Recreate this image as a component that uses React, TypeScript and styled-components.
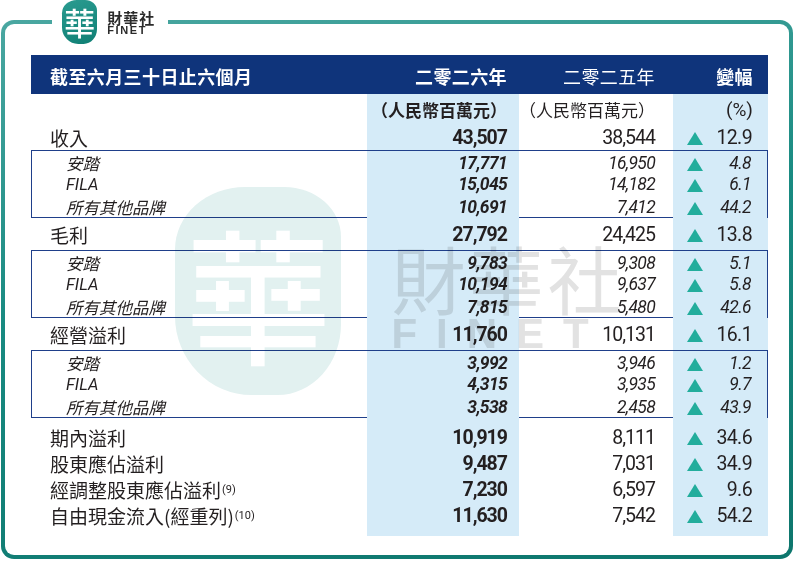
import React from "react";
import styled, { createGlobalStyle } from "styled-components";

const GlobalStyle = createGlobalStyle`
  html, body {
    margin: 0;
    padding: 0;
    background: #ffffff;
  }
  body {
    width: 794px;
    height: 580px;
    overflow: hidden;
    font-family: "Noto Sans CJK TC", "Noto Sans", sans-serif;
    color: #231f20;
  }
`;

const CJK = `"Noto Sans CJK TC", "Noto Sans CJK SC", sans-serif`;
const NUM = `Roboto, "Liberation Sans", "Noto Sans CJK TC", sans-serif`;
const NAVY = "#0f347b";
const SKY = "#d5ebf8";

const Page = styled.div`
  position: relative;
  padding: 20px 0 0 1px;
`;

const Frame = styled.div`
  box-sizing: border-box;
  width: 792px;
  height: 539px;
  padding: 4px;
  border-radius: 13px;
  background: linear-gradient(170deg, #4aa7a1 0%, #188a81 45%, #0d766d 100%);
`;

const Inner = styled.div`
  position: relative;
  box-sizing: border-box;
  height: 100%;
  padding: 31px 21px 0 26px;
  background: #ffffff;
  border-radius: 9px;
`;

/* ---------- logo sitting on the frame's top edge ---------- */

const LogoGap = styled.div`
  position: absolute;
  left: 52px;
  top: 0;
  width: 116px;
  height: 46px;
  display: flex;
  align-items: flex-start;
  gap: 10px;
  padding-left: 10px;
  box-sizing: border-box;
  background: #ffffff;
`;

const LogoSeal = styled.div<{ $size: number; $bg: string; $fg: string }>`
  width: ${(p) => p.$size * 0.8}px;
  height: ${(p) => p.$size}px;
  border-radius: 42% 34% 38% 46% / 30% 24% 34% 38%;
  background: ${(p) => p.$bg};
  color: ${(p) => p.$fg};
  display: flex;
  align-items: center;
  justify-content: center;
  font-family: ${CJK};
  font-weight: 500;
  font-size: ${(p) => p.$size * 0.7}px;
  line-height: 1;
`;

const LogoWords = styled.div`
  display: flex;
  flex-direction: column;
  padding-top: 10px;
`;

const LogoCn = styled.span`
  font-family: ${CJK};
  font-weight: 700;
  font-size: 15px;
  line-height: 15px;
  letter-spacing: 1px;
  color: #2b2b2b;
`;

const LogoEn = styled.span`
  font-family: "Liberation Sans", Arial, sans-serif;
  font-weight: 700;
  font-size: 11px;
  line-height: 11px;
  letter-spacing: 1.6px;
  color: #2b2b2b;
`;

/* ---------- faint watermark over the table ---------- */

const Watermark = styled.div`
  position: absolute;
  left: 170px;
  top: 163px;
  display: flex;
  align-items: center;
  gap: 50px;
  pointer-events: none;
  mix-blend-mode: multiply;
  z-index: 2;
`;

const WaterWords = styled.div`
  display: flex;
  flex-direction: column;
  align-items: flex-start;
  margin-top: 12px;
  color: #e2e2e2;
`;

const WaterCn = styled.span`
  font-family: ${CJK};
  font-size: 74px;
  line-height: 74px;
  letter-spacing: 4px;
`;

const WaterEn = styled.span`
  font-family: "Liberation Sans", Arial, sans-serif;
  font-weight: 700;
  font-size: 42px;
  line-height: 40px;
  letter-spacing: 19px;
`;

/* ---------- table ---------- */

const Table = styled.div`
  width: 737px;
  display: flex;
  flex-direction: column;
`;

const Row = styled.div<{ $h: number; $inBox?: boolean }>`
  display: grid;
  grid-template-columns: ${(p) => (p.$inBox ? "335px 152px 154px 94px" : "336px 152px 154px 95px")};
  height: ${(p) => p.$h}px;
`;

const HeaderRow = styled(Row)`
  background: ${NAVY};
  color: #ffffff;
  font-family: ${CJK};
  font-size: 18px;
`;

const HeadCell = styled.div<{ $bold?: boolean; $right?: number; $left?: number }>`
  display: flex;
  align-items: center;
  justify-content: ${(p) => (p.$left !== undefined ? "flex-start" : "flex-end")};
  padding-left: ${(p) => p.$left ?? 0}px;
  padding-right: ${(p) => p.$right ?? 0}px;
  font-weight: ${(p) => (p.$bold ? 700 : 400)};
  letter-spacing: 0.4px;
  padding-top: 2px;
`;

const Cell = styled.div<{ $sky?: boolean }>`
  display: flex;
  align-items: center;
  background: ${(p) => (p.$sky ? SKY : "transparent")};
`;

const Label = styled(Cell)<{ $sub?: boolean }>`
  padding-left: ${(p) => (p.$sub ? 34 : 19)}px;
  font-family: ${(p) => (p.$sub ? `Roboto, ${CJK}` : CJK)};
  font-size: ${(p) => (p.$sub ? 16.5 : 19)}px;
  font-style: ${(p) => (p.$sub ? "italic" : "normal")};
  white-space: nowrap;
`;

const Note = styled.sup`
  font-family: Roboto, sans-serif;
  font-size: 11px;
  line-height: 1;
  vertical-align: 8px;
  margin-left: 1px;
`;

const Num = styled(Cell)<{ $bold?: boolean; $sub?: boolean; $right: number }>`
  justify-content: flex-end;
  padding-right: ${(p) => p.$right}px;
  font-family: ${NUM};
  font-size: ${(p) => (p.$sub ? 17.5 : 19.5)}px;
  font-style: ${(p) => (p.$sub ? "italic" : "normal")};
  font-weight: ${(p) => (p.$bold ? 700 : 400)};
  letter-spacing: ${(p) => (p.$sub ? -0.7 : -1)}px;
`;

const Unit = styled(Cell)<{ $bold?: boolean; $right: number }>`
  justify-content: flex-end;
  padding-right: ${(p) => p.$right}px;
  font-family: ${CJK};
  font-size: 17px;
  font-weight: ${(p) => (p.$bold ? 700 : 400)};
  white-space: nowrap;
`;

const Percent = styled(Cell)`
  justify-content: flex-end;
  padding-right: 15px;
  font-family: ${NUM};
  font-size: 19px;
`;

const Change = styled(Cell)<{ $sub?: boolean }>`
  justify-content: space-between;
  padding: 0 16px 0 14px;
  background: ${SKY};
  font-family: ${NUM};
  font-size: ${(p) => (p.$sub ? 17.5 : 19.5)}px;
  font-style: ${(p) => (p.$sub ? "italic" : "normal")};
  letter-spacing: -0.6px;
`;

const UpArrow = styled.span`
  width: 0;
  height: 0;
  border-left: 8px solid transparent;
  border-right: 8px solid transparent;
  border-bottom: 13px solid #22ad9c;
  margin-top: 2px;
`;

const Box = styled.div`
  border: 1px solid #1f3f8a;
  display: flex;
  flex-direction: column;
`;

const Tail = styled.div<{ $h: number }>`
  display: grid;
  grid-template-columns: 336px 152px 154px 95px;
  height: ${(p) => p.$h}px;
`;

const Spacer = styled.div<{ $sky?: boolean }>`
  background: ${(p) => (p.$sky ? SKY : "transparent")};
`;

type Line = { label: string; note?: string; cur: string; prev: string; chg: string };
type Section = { main: Line; parts: Line[] };

const sections: Section[] = [
  {
    main: { label: "收入", cur: "43,507", prev: "38,544", chg: "12.9" },
    parts: [
      { label: "安踏", cur: "17,771", prev: "16,950", chg: "4.8" },
      { label: "FILA", cur: "15,045", prev: "14,182", chg: "6.1" },
      { label: "所有其他品牌", cur: "10,691", prev: "7,412", chg: "44.2" },
    ],
  },
  {
    main: { label: "毛利", cur: "27,792", prev: "24,425", chg: "13.8" },
    parts: [
      { label: "安踏", cur: "9,783", prev: "9,308", chg: "5.1" },
      { label: "FILA", cur: "10,194", prev: "9,637", chg: "5.8" },
      { label: "所有其他品牌", cur: "7,815", prev: "5,480", chg: "42.6" },
    ],
  },
  {
    main: { label: "經營溢利", cur: "11,760", prev: "10,131", chg: "16.1" },
    parts: [
      { label: "安踏", cur: "3,992", prev: "3,946", chg: "1.2" },
      { label: "FILA", cur: "4,315", prev: "3,935", chg: "9.7" },
      { label: "所有其他品牌", cur: "3,538", prev: "2,458", chg: "43.9" },
    ],
  },
];

const tail: Line[] = [
  { label: "期內溢利", cur: "10,919", prev: "8,111", chg: "34.6" },
  { label: "股東應佔溢利", cur: "9,487", prev: "7,031", chg: "34.9" },
  { label: "經調整股東應佔溢利", note: "(9)", cur: "7,230", prev: "6,597", chg: "9.6" },
  { label: "自由現金流入(經重列)", note: "(10)", cur: "11,630", prev: "7,542", chg: "54.2" },
];

const mainHeights = [26, 32, 32];

const MainRow: React.FC<{ line: Line; h: number }> = ({ line, h }) => (
  <Row $h={h}>
    <Label>
      {line.label}
      {line.note && <Note>{line.note}</Note>}
    </Label>
    <Num $sky $bold $right={12}>
      {line.cur}
    </Num>
    <Num $right={18}>{line.prev}</Num>
    <Change>
      <UpArrow />
      {line.chg}
    </Change>
  </Row>
);

const SubRow: React.FC<{ line: Line }> = ({ line }) => (
  <Row $h={22} $inBox>
    <Label $sub>{line.label}</Label>
    <Num $sky $bold $sub $right={12}>
      {line.cur}
    </Num>
    <Num $sub $right={18}>
      {line.prev}
    </Num>
    <Change $sub>
      <UpArrow />
      {line.chg}
    </Change>
  </Row>
);

const Gap: React.FC<{ h: number }> = ({ h }) => (
  <Tail $h={h}>
    <Spacer />
    <Spacer $sky />
    <Spacer />
    <Spacer $sky />
  </Tail>
);

const App: React.FC = () => {
  return (
    <>
      <GlobalStyle />
      <Page>
        <Frame>
          <Inner>
            <Table>
              <HeaderRow $h={39}>
                <HeadCell $bold $left={19}>
                  截至六月三十日止六個月
                </HeadCell>
                <HeadCell $bold $right={12}>
                  二零二六年
                </HeadCell>
                <HeadCell $right={18}>二零二五年</HeadCell>
                <HeadCell $bold $right={15}>
                  變幅
                </HeadCell>
              </HeaderRow>

              <Row $h={30}>
                <Cell />
                <Unit $sky $bold $right={12}>
                  （人民幣百萬元）
                </Unit>
                <Unit $right={18}>（人民幣百萬元）</Unit>
                <Percent $sky>(%)</Percent>
              </Row>

              {sections.map((s, i) => (
                <React.Fragment key={s.main.label}>
                  <MainRow line={s.main} h={mainHeights[i]} />
                  <Box>
                    {s.parts.map((p) => (
                      <SubRow key={p.label} line={p} />
                    ))}
                  </Box>
                </React.Fragment>
              ))}

              <Gap h={6} />
              {tail.map((t) => (
                <MainRow key={t.label} line={t} h={26} />
              ))}
              <Gap h={8} />
            </Table>

            <Watermark>
              <LogoSeal $size={208} $bg="#e2f1f0" $fg="#ffffff">
                華
              </LogoSeal>
              <WaterWords>
                <WaterCn>財華社</WaterCn>
                <WaterEn>FINET</WaterEn>
              </WaterWords>
            </Watermark>
          </Inner>
        </Frame>

        <LogoGap>
          <LogoSeal $size={44} $bg="linear-gradient(160deg, #2a9b90 0%, #0f7f74 100%)" $fg="#ffffff">
            華
          </LogoSeal>
          <LogoWords>
            <LogoCn>財華社</LogoCn>
            <LogoEn>FINET</LogoEn>
          </LogoWords>
        </LogoGap>
      </Page>
    </>
  );
};

export default App;
